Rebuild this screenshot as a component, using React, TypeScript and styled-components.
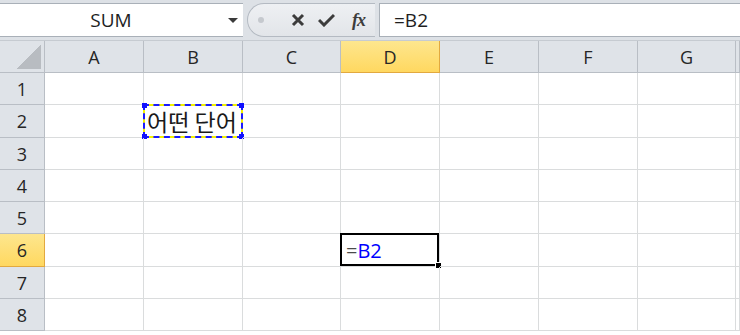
import styled, { createGlobalStyle } from "styled-components";

const GlobalStyle = createGlobalStyle`
  html, body {
    margin: 0;
    padding: 0;
    background: #ffffff;
    overflow: hidden;
  }
  body {
    font-family: "Open Sans", "Noto Sans", "Noto Sans CJK KR", sans-serif;
  }
`;

const COLUMNS = ["A", "B", "C", "D", "E", "F", "G"];
const COL_WIDTHS = [99, 99, 98, 99, 99, 99, 98];
const ROW_HEIGHTS = [32, 33, 32, 32, 32, 33, 32, 32];
const ACTIVE_COL = "D";
const ACTIVE_ROW = 6;

const Screen = styled.div`
  width: 740px;
  height: 335px;
  overflow: hidden;
  display: flex;
  flex-direction: column;
  background: #ffffff;
`;

const FormulaBar = styled.div`
  height: 41px;
  box-sizing: border-box;
  display: flex;
  align-items: flex-start;
  padding-top: 3px;
  background: #dde1e6;
  border-bottom: 1px solid #c6cbd1;
`;

const NameBox = styled.div`
  width: 243px;
  height: 34px;
  box-sizing: border-box;
  display: flex;
  align-items: center;
  background: #ffffff;
  border-top: 1px solid #a9b0b8;
  border-bottom: 1px solid #a9b0b8;
`;

const NameText = styled.span`
  flex: 1;
  text-align: center;
  padding-right: 6px;
  font-size: 19px;
  color: #1e1e1e;
`;

const DropArrow = styled.span`
  width: 0;
  height: 0;
  margin-right: 5px;
  border-left: 5px solid transparent;
  border-right: 5px solid transparent;
  border-top: 5px solid #3a3a3a;
`;

const ButtonPill = styled.div`
  width: 128px;
  height: 34px;
  box-sizing: border-box;
  margin-left: 4px;
  display: flex;
  align-items: center;
  background: linear-gradient(#eef0f3, #e2e5e9);
  border: 1px solid #b4bac2;
  border-right: none;
  border-radius: 17px 0 0 17px;
`;

const Dot = styled.span`
  width: 6px;
  height: 6px;
  margin-left: 10px;
  border-radius: 50%;
  background: #c5c9ce;
`;

const ToolIcon = styled.span<{ $gap: number }>`
  display: flex;
  align-items: center;
  margin-left: ${(p) => p.$gap}px;
  color: #3c3c3c;
`;

const Fx = styled.span`
  margin-left: 17px;
  font-family: "Liberation Serif", serif;
  font-style: italic;
  font-weight: bold;
  font-size: 18px;
  color: #3c3c3c;
  letter-spacing: -1px;
`;

const FormulaInput = styled.div`
  flex: 1;
  height: 34px;
  box-sizing: border-box;
  margin-left: 4px;
  display: flex;
  align-items: center;
  padding-left: 14px;
  background: #ffffff;
  border: 1px solid #a9b0b8;
  border-right: none;
  font-size: 19px;
  color: #1e1e1e;
`;

const Grid = styled.div`
  display: grid;
  grid-template-columns: 45px ${COL_WIDTHS.map((w) => `${w}px`).join(" ")} 1fr;
  grid-template-rows: 32px ${ROW_HEIGHTS.map((h) => `${h}px`).join(" ")};
`;

const Corner = styled.div`
  position: relative;
  box-sizing: border-box;
  background: #dfe3e8;
  border-right: 1px solid #b9bec5;
  border-bottom: 1px solid #b9bec5;

  &::after {
    content: "";
    position: absolute;
    right: 3px;
    bottom: 3px;
    width: 24px;
    height: 24px;
    background: linear-gradient(135deg, transparent 50%, #b8bcc1 50%);
  }
`;

const HeaderCell = styled.div<{ $active?: boolean }>`
  box-sizing: border-box;
  display: flex;
  align-items: center;
  justify-content: center;
  font-size: 18px;
  color: #262626;
  background: ${(p) =>
    p.$active ? "linear-gradient(#fde68e, #ffd860)" : "#dfe3e8"};
  border-right: 1px solid ${(p) => (p.$active ? "#e2a93f" : "#b9bec5")};
  border-bottom: 1px solid ${(p) => (p.$active ? "#e2a93f" : "#b9bec5")};
`;

const Cell = styled.div`
  position: relative;
  box-sizing: border-box;
  border-right: 1px solid #dadcdd;
  border-bottom: 1px solid #dadcdd;
  display: flex;
  align-items: center;
  padding-left: 3px;
  font-family: "Noto Sans CJK KR", "Noto Sans", sans-serif;
  font-size: 23px;
  color: #1a1a1a;
  white-space: nowrap;
`;

const CopyMarquee = styled.div`
  position: absolute;
  inset: -1px -1px -1px -1px;
  border: 2px solid #f2f200;

  &::before {
    content: "";
    position: absolute;
    inset: -2px;
    border: 2px dashed #1a1aff;
  }
`;

const Handle = styled.span<{ $x: "left" | "right"; $y: "top" | "bottom" }>`
  position: absolute;
  width: 5px;
  height: 5px;
  background: #1010ff;
  ${(p) => p.$x}: -3px;
  ${(p) => p.$y}: -3px;
`;

const ActiveBox = styled.div`
  position: absolute;
  inset: -1px 0 0 -1px;
  border: 2px solid #000000;
`;

const FillHandle = styled.span`
  position: absolute;
  right: -4px;
  bottom: -4px;
  width: 5px;
  height: 5px;
  background: #000000;
  border: 1px solid #ffffff;
  border-right: none;
  border-bottom: none;
`;

const CellText = styled.span`
  position: relative;
  z-index: 1;
  padding-left: 2px;
  font-family: "Open Sans", "Noto Sans", sans-serif;
  font-size: 20px;
`;

const Equals = styled.span`
  color: #4a4a4a;
`;

const Ref = styled.span`
  color: #0000ff;
`;

const CancelIcon = () => (
  <svg width="14" height="14" viewBox="0 0 14 14">
    <path d="M2 2 L12 12 M12 2 L2 12" stroke="#3c3c3c" strokeWidth="3" strokeLinecap="butt" />
  </svg>
);

const EnterIcon = () => (
  <svg width="17" height="14" viewBox="0 0 17 14">
    <path d="M1 7 L6 12 L16 2" stroke="#3c3c3c" strokeWidth="3" fill="none" />
  </svg>
);

const renderCell = (col: string, row: number) => {
  if (col === "B" && row === 2) {
    return (
      <Cell key={col + row}>
        <CopyMarquee>
          <Handle $x="left" $y="top" />
          <Handle $x="right" $y="top" />
          <Handle $x="left" $y="bottom" />
          <Handle $x="right" $y="bottom" />
        </CopyMarquee>
        <span style={{ position: "relative" }}>어떤 단어</span>
      </Cell>
    );
  }
  if (col === ACTIVE_COL && row === ACTIVE_ROW) {
    return (
      <Cell key={col + row}>
        <ActiveBox>
          <FillHandle />
        </ActiveBox>
        <CellText>
          <Equals>=</Equals>
          <Ref>B2</Ref>
        </CellText>
      </Cell>
    );
  }
  return <Cell key={col + row} />;
};

export default function App() {
  return (
    <>
      <GlobalStyle />
      <Screen>
        <FormulaBar>
          <NameBox>
            <NameText>SUM</NameText>
            <DropArrow />
          </NameBox>
          <ButtonPill>
            <Dot />
            <ToolIcon $gap={27}>
              <CancelIcon />
            </ToolIcon>
            <ToolIcon $gap={13}>
              <EnterIcon />
            </ToolIcon>
            <Fx>fx</Fx>
          </ButtonPill>
          <FormulaInput>=B2</FormulaInput>
        </FormulaBar>
        <Grid>
          <Corner />
          {COLUMNS.map((c) => (
            <HeaderCell key={c} $active={c === ACTIVE_COL}>
              {c}
            </HeaderCell>
          ))}
          <HeaderCell />
          {ROW_HEIGHTS.map((_, i) => {
            const row = i + 1;
            return [
              <HeaderCell key={"r" + row} $active={row === ACTIVE_ROW}>
                {row}
              </HeaderCell>,
              ...COLUMNS.map((c) => renderCell(c, row)),
              <Cell key={"x" + row} />,
            ];
          })}
        </Grid>
      </Screen>
    </>
  );
}
